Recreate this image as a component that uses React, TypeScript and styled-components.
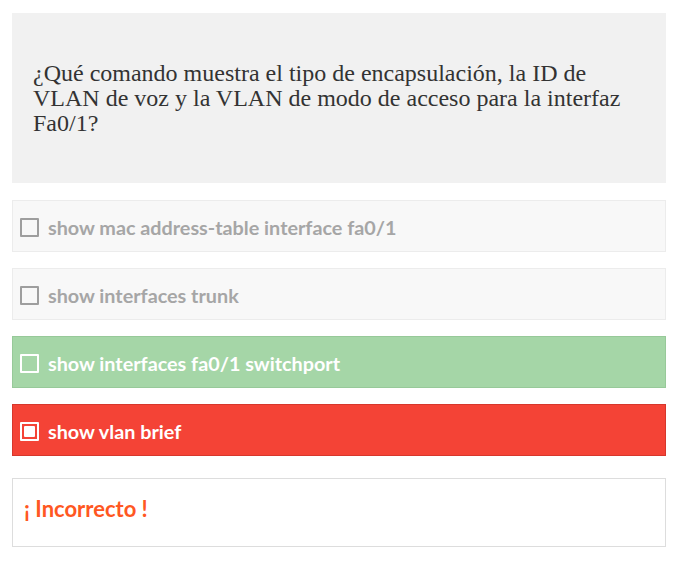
import React from 'react'
import styled, { createGlobalStyle } from 'styled-components'

const GlobalStyle = createGlobalStyle`
    html, body {
        margin: 0;
        padding: 0;
        background: #ffffff;
    }
`

const Page = styled.div`
    padding: 13px 20px 0 12px;
    width: 654px;
    font-family: Lato, 'Liberation Sans', sans-serif;
`

const Question = styled.div`
    background: #f1f1f1;
    padding: 48px 21px 47px;
    margin-bottom: 17px;
    font-family: 'Liberation Serif', serif;
    font-size: 24px;
    line-height: 25px;
    color: #333333;
    white-space: nowrap;
`

const Options = styled.div`
    display: flex;
    flex-direction: column;
    gap: 16px;
`

type Tone = 'idle' | 'right' | 'wrong'

const tones = {
    idle: { bg: '#f8f8f8', border: '#ececec', text: '#a6a6a6', box: '#9e9e9e' },
    right: { bg: '#a5d6a7', border: '#97c999', text: '#ffffff', box: '#ffffff' },
    wrong: { bg: '#f44336', border: '#d6372c', text: '#ffffff', box: '#ffffff' },
}

const Option = styled.div<{ $tone: Tone }>`
    display: flex;
    align-items: center;
    gap: 9px;
    height: 52px;
    box-sizing: border-box;
    padding: 2px 7px 0;
    background: ${(p) => tones[p.$tone].bg};
    border: 1px solid ${(p) => tones[p.$tone].border};
    color: ${(p) => tones[p.$tone].text};
    font-size: 19.8px;
    font-weight: 700;
`

const Box = styled.span<{ $tone: Tone; $checked?: boolean }>`
    display: flex;
    align-items: center;
    justify-content: center;
    flex: none;
    width: 19px;
    height: 19px;
    box-sizing: border-box;
    border: 2px solid ${(p) => tones[p.$tone].box};
    border-radius: 1px;
    &::after {
        content: '';
        display: ${(p) => (p.$checked ? 'block' : 'none')};
        width: 11px;
        height: 11px;
        border-radius: 1px;
        background: ${(p) => tones[p.$tone].box};
    }
`

const Feedback = styled.div`
    display: flex;
    align-items: center;
    margin-top: 22px;
    height: 69px;
    box-sizing: border-box;
    padding: 0 11px 8px;
    border: 1px solid #dddddd;
    color: #ff5722;
    font-size: 22px;
    font-weight: 700;
`

const answers: { label: string; tone: Tone; checked?: boolean }[] = [
    { label: 'show mac address-table interface fa0/1', tone: 'idle' },
    { label: 'show interfaces trunk', tone: 'idle' },
    { label: 'show interfaces fa0/1 switchport', tone: 'right' },
    { label: 'show vlan brief', tone: 'wrong', checked: true },
]

const App = () => {
    return (
        <>
            <GlobalStyle />
            <Page>
                <Question>
                    ¿Qué comando muestra el tipo de encapsulación, la ID de
                    <br />
                    VLAN de voz y la VLAN de modo de acceso para la interfaz
                    <br />
                    Fa0/1?
                </Question>
                <Options>
                    {answers.map((a, i) => (
                        <Option key={i} $tone={a.tone}>
                            <Box $tone={a.tone} $checked={a.checked} />
                            {a.label}
                        </Option>
                    ))}
                </Options>
                <Feedback>¡ Incorrecto !</Feedback>
            </Page>
        </>
    )
}

export default App
